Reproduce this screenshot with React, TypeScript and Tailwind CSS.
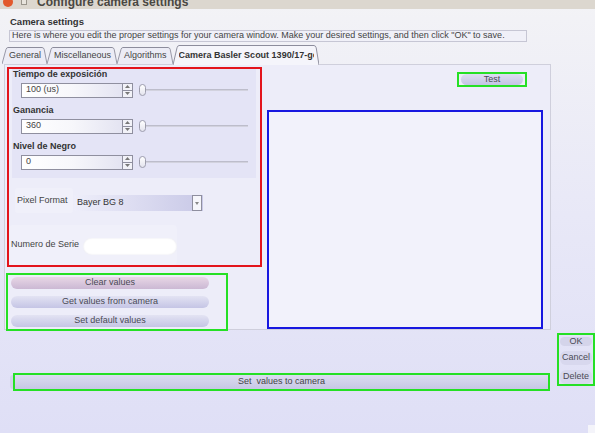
import React from "react";

const tabs = ["General", "Miscellaneous", "Algorithms"];

const spinRows = [
  { label: "Tiempo de exposición", value: "100 (us)" },
  { label: "Ganancia", value: "360" },
  { label: "Nivel de Negro", value: "0" },
];

function Tab({ label, active = false }: { label: string; active?: boolean }) {
  const fill = active ? "#f5f5fb" : "#ececf6";
  return (
    <div className={active ? "flex items-stretch h-[20px] -mb-px z-10" : "flex items-stretch h-[17px] mt-[2px]"}>
      <svg width="6" height="100%" viewBox="0 0 6 18" preserveAspectRatio="none" className="shrink-0">
        <path d="M0 18 L4 2.5 Q4.6 0.5 6 0.5 V18 Z" fill={fill} />
        <path d="M0 18 L4 2.5 Q4.6 0.5 6 0.5" fill="none" stroke="#8c8c9c" strokeWidth="0.9" />
      </svg>
      <div
        className={
          active
            ? "border-t border-[#8c8c9c] bg-[#f5f5fb] flex items-center w-[135px] overflow-hidden whitespace-nowrap text-[9px] font-bold text-[#333]"
            : "border-t border-[#8c8c9c] bg-[#ececf6] flex items-center px-[1px] whitespace-nowrap text-[9px] text-[#444]"
        }
      >
        {label}
      </div>
      <svg width="5" height="100%" viewBox="0 0 5 18" preserveAspectRatio="none" className="shrink-0">
        <path d="M0 0.5 Q1.6 0.5 2.2 2.5 L5 18 H0 Z" fill={fill} />
        <path d="M0 0.5 Q1.6 0.5 2.2 2.5 L5 18" fill="none" stroke="#8c8c9c" strokeWidth="0.9" />
      </svg>
    </div>
  );
}

function SpinRow({ value }: { value: string }) {
  return (
    <div className="flex items-center h-[16px] mt-[2px] pl-[9px]">
      <div className="w-[101px] h-[15px] border border-[#8f8f9f] border-r-0 bg-gradient-to-r from-white via-[#f7f7fb] to-[#e4e4f2] flex items-center pl-[4px] text-[9px] text-[#444]">
        {value}
      </div>
      <div className="w-[11px] h-[15px] border border-[#8f8f9f] bg-[#f2f2f8] flex flex-col">
        <div className="flex-1 border-b border-[#8f8f9f] flex items-center justify-center">
          <svg width="5" height="3" viewBox="0 0 5 3"><path d="M0 3 L2.5 0 L5 3 Z" fill="#777" /></svg>
        </div>
        <div className="flex-1 flex items-center justify-center">
          <svg width="5" height="3" viewBox="0 0 5 3"><path d="M0 0 L2.5 3 L5 0 Z" fill="#777" /></svg>
        </div>
      </div>
      <div className="ml-[6px] w-[109px] flex items-center">
        <div className="w-[7px] h-[12px] rounded-full border border-[#9d9dad] bg-gradient-to-b from-white to-[#e4e4ee] shrink-0" />
        <div className="flex-1 h-[2px] bg-[#d2d2de] border-t border-[#bdbdcb]" />
      </div>
    </div>
  );
}

function PillButton({ label, className }: { label: string; className: string }) {
  return (
    <div className={`flex items-center justify-center rounded-[6px] text-[9px] text-[#4a4a55] ${className}`}>
      {label}
    </div>
  );
}

export default function App() {
  return (
    <div className="relative w-[595px] h-[433px] overflow-hidden flex flex-col bg-gradient-to-b from-[#f3f3f6] via-[#e8e8f7] to-[#dfdff6] font-['Liberation_Sans',Arial,sans-serif] text-[#333]">
      {/* ── Title bar ─────────────────────────────────────────── */}
      <div className="h-[9px] shrink-0 overflow-hidden bg-[#dcd7cf]">
        <div className="h-[15px] -mt-[6px] flex items-center pl-[3px]">
          <div className="w-[10px] h-[10px] rounded-full bg-[#e2582c]" />
          <div className="ml-[8px] w-[6px] h-[6px] border border-[#9a958c] bg-[#e8e4dd]" />
          <span className="ml-[10px] text-[12px] font-bold text-[#4a4742] whitespace-nowrap">Configure camera settings</span>
        </div>
      </div>

      {/* ── Header ────────────────────────────────────────────── */}
      <div className="pt-[7px] pl-[10px] h-[12px] box-content flex items-center text-[9.5px] font-bold text-[#333]">
        Camera settings
      </div>
      <div className="ml-[9px] mt-[2px] w-[518px] h-[12px] border border-[#c6c6d4] bg-[#f0f0f8] flex items-center pl-[2px] text-[9px] text-[#444] whitespace-nowrap overflow-hidden">
        Here is where you edit the proper settings for your camera window. Make your desired settings, and then click "OK" to save.
      </div>

      {/* ── Tabs ──────────────────────────────────────────────── */}
      <div className="mt-[3px] ml-[2px] flex items-start h-[19px]">
        {tabs.map((t) => (
          <Tab key={t} label={t} />
        ))}
        <Tab label="Camera Basler Scout 1390/17-gc" active />
      </div>

      {/* ── Pane ──────────────────────────────────────────────── */}
      <div className="ml-[4px] w-[547px] h-[266px] shrink-0 border border-[#cfcfdc] bg-[#ededf9] flex">
        {/* left column */}
        <div className="w-[257px] shrink-0 flex flex-col items-start">
          <div className="ml-[2px] mt-[2px] w-[255px] h-[202px] border-2 border-[#e3141c] flex flex-col items-start">
            <div className="ml-[3px] w-[244px] pb-[8px] bg-[#e4e4f6] flex flex-col">
              {spinRows.map((r, i) => (
                <div key={r.label} className={i === 0 ? "" : "mt-[7px]"}>
                  <div className="h-[11px] pl-[1px] flex items-center text-[9px] font-bold text-[#333]">{r.label}</div>
                  <SpinRow value={r.value} />
                </div>
              ))}
            </div>

            <div className="ml-[6px] mt-[10px] flex items-start h-[25px]">
              <div className="w-[58px] h-[25px] rounded-[3px] bg-[#f0f0fa] flex items-center pl-[2px] text-[9px] text-[#444]">
                Pixel Format
              </div>
              <div className="mt-[7px] ml-[1px] w-[129px] h-[16px] bg-gradient-to-r from-[#eeeefa] to-[#c9c9e7] flex items-center pl-[3px] text-[9px] text-[#333]">
                <span className="flex-1">Bayer BG 8</span>
                <div className="w-[10px] h-[16px] border border-[#8f8f9f] bg-[#f6f6fb] flex items-center justify-center mr-[1px]">
                  <svg width="4" height="3" viewBox="0 0 4 3"><path d="M0 0 L2 3 L4 0 Z" fill="#888" /></svg>
                </div>
              </div>
            </div>

            <div className="mt-[12px] w-[168px] h-[40px] rounded-[4px] bg-[#f0f0fa] flex items-center pl-[2px]">
              <span className="text-[9px] text-[#444] whitespace-nowrap">Numero de Serie</span>
              <div className="ml-auto mt-[3px] w-[94px] h-[17px] rounded-full bg-white shadow-[inset_0_0_2px_#e0e0ea]" />
            </div>
          </div>

          <div className="ml-[1px] mt-[6px] w-[222px] h-[58px] shrink-0 border-2 border-[#25e025] flex flex-col pl-[3px] pt-[2px]">
            <PillButton label="Clear values" className="w-[198px] h-[12px] bg-gradient-to-b from-[#e8d7e6] to-[#cbb8d4]" />
            <PillButton label="Get values from camera" className="mt-[7px] w-[198px] h-[12px] bg-gradient-to-b from-[#e3e3f3] to-[#c5c5e5]" />
            <PillButton label="Set default values" className="mt-[7px] w-[198px] h-[12px] bg-gradient-to-b from-[#e3e3f3] to-[#c5c5e5]" />
          </div>
        </div>

        {/* right column */}
        <div className="flex flex-col items-start">
          <div className="ml-[195px] mt-[7px] w-[70px] h-[17px] border-2 border-[#25e025] flex items-center justify-center">
            <PillButton label="Test" className="w-[62px] h-[11px] rounded-[3px] bg-gradient-to-b from-[#dedef2] to-[#c4c4e4]" />
          </div>
          <div className="ml-[5px] mt-[23px] w-[276px] h-[219px] shrink-0 border-2 border-[#1818e0] bg-[#f2f2fb]" />
        </div>
      </div>

      {/* ── Bottom ────────────────────────────────────────────── */}
      <div className="flex items-start">
        <div className="ml-[10px] mt-[43px] w-[540px] h-[18px] shrink-0 flex items-center">
          <div className="w-[3px] h-[14px] rounded-l-full bg-[#d2d2ea]" />
          <div className="w-[537px] h-[18px] border-2 border-[#25e025] bg-gradient-to-b from-[#dcdcf0] to-[#c7c7e5] flex items-center justify-center text-[9px] text-[#444] whitespace-pre">
            Set  values to camera
          </div>
        </div>
        <div className="ml-[7px] mt-[3px] w-[38px] h-[53px] shrink-0 border-2 border-[#25e025] flex flex-col items-center pt-[2px] gap-[5px]">
          <PillButton label="OK" className="w-[32px] h-[9px] bg-[#d4d4ea]" />
          <PillButton label="Cancel" className="w-[32px] h-[15px] bg-[#d8d8ee]" />
          <PillButton label="Delete" className="w-[32px] h-[15px] bg-[#d8d8ee]" />
        </div>
      </div>

      <div className="absolute right-0 bottom-0 w-[7px] h-[8px] bg-[#f4f4fa]" />
    </div>
  );
}
